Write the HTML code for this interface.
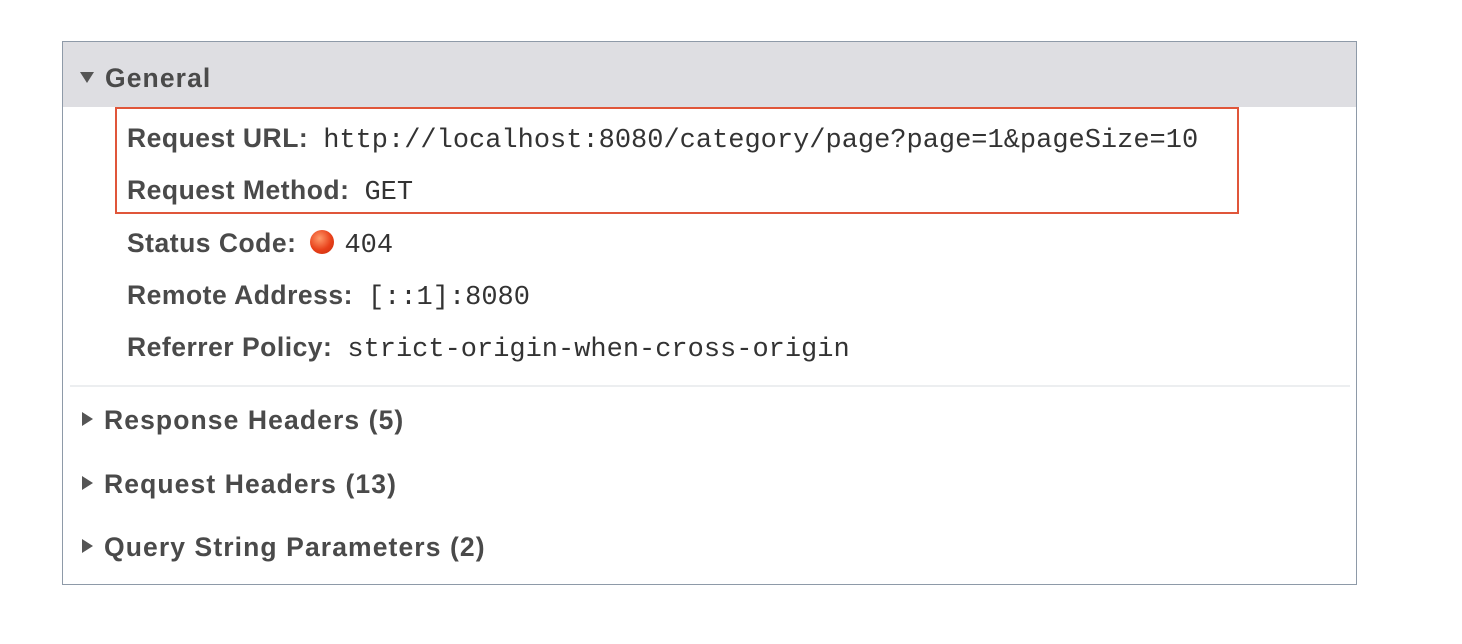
<!DOCTYPE html>
<html><head><style>
body{margin:0;width:1462px;height:644px;background:#fff;position:relative;overflow:hidden;font-family:"Liberation Sans",sans-serif;color:#4a4a4a}
.box{position:absolute;left:62px;top:41px;width:1293px;height:542px;border:1px solid #8e9aa8;}
.hdr{position:absolute;left:63px;top:42px;width:1293px;height:65px;background:#dedee2}
.l{position:absolute;height:34px;line-height:34px;font-size:26.5px;font-weight:bold;white-space:nowrap;letter-spacing:0.5px}
.s{letter-spacing:1.1px}
.m{font-family:"Liberation Mono",monospace;font-weight:normal;font-size:27px;color:#333;margin-left:15px;letter-spacing:0}
.red{position:absolute;left:115px;top:107px;width:1120px;height:103px;border:2px solid #e0563a}
.sep{position:absolute;left:70px;top:385px;width:1280px;height:2px;background:#eceef0}
.tri{display:inline-block;width:0;height:0;margin-right:11px;vertical-align:middle}
.down{border-left:7px solid transparent;border-right:7px solid transparent;border-top:11px solid #555;position:relative;top:-3px}
.right{border-top:7px solid transparent;border-bottom:7px solid transparent;border-left:11px solid #555;position:relative;top:-3px}
.dot{display:inline-block;width:24px;height:24px;border-radius:50%;background:radial-gradient(circle at 40% 35%,#ff9a6a,#e8401a 55%,#c62c0a);vertical-align:middle;position:relative;top:-3px;margin-left:14px}
</style></head><body>
<div class="box"></div>
<div class="hdr"></div>
<div class="l s" style="left:80px;top:61px"><span class="tri down"></span>General</div>
<div class="red"></div>
<div class="l" style="left:127px;top:121px">Request URL:<span class="m">http://localhost:8080/category/page?page=1&amp;pageSize=10</span></div>
<div class="l" style="left:127px;top:173px">Request Method:<span class="m">GET</span></div>
<div class="l" style="left:127px;top:226px">Status Code:<span class="dot"></span><span class="m" style="margin-left:10px">404</span></div>
<div class="l" style="left:127px;top:278px">Remote Address:<span class="m">[::1]:8080</span></div>
<div class="l" style="left:127px;top:330px">Referrer Policy:<span class="m">strict-origin-when-cross-origin</span></div>
<div class="sep"></div>
<div class="l s" style="left:82px;top:403px"><span class="tri right"></span>Response Headers (5)</div>
<div class="l s" style="left:82px;top:467px"><span class="tri right"></span>Request Headers (13)</div>
<div class="l s" style="left:82px;top:530px"><span class="tri right"></span>Query String Parameters (2)</div>
</body></html>
